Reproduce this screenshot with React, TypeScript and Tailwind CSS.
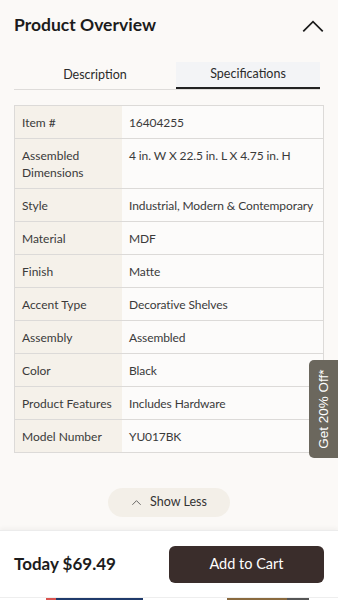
import { useState } from "react";

interface Spec {
  label: string;
  value: string;
}

const specs: Spec[] = [
  { label: "Item #", value: "16404255" },
  { label: "Assembled Dimensions", value: "4 in. W X 22.5 in. L X 4.75 in. H" },
  { label: "Style", value: "Industrial, Modern & Contemporary" },
  { label: "Material", value: "MDF" },
  { label: "Finish", value: "Matte" },
  { label: "Accent Type", value: "Decorative Shelves" },
  { label: "Assembly", value: "Assembled" },
  { label: "Color", value: "Black" },
  { label: "Product Features", value: "Includes Hardware" },
  { label: "Model Number", value: "YU017BK" },
];

const ChevronUp = ({ className }: { className?: string }) => (
  <svg viewBox="0 0 24 24" fill="none" stroke="currentColor" strokeWidth={1.6} className={className}>
    <path d="M3 17 L12 8 L21 17" />
  </svg>
);

const App = () => {
  const [tab, setTab] = useState("spec");

  return (
    <div
      className="relative h-[600px] w-[338px] overflow-hidden bg-[#fbf9f7] text-[#2b2b2b] flex flex-col"
      style={{ fontFamily: "Lato, 'Open Sans', sans-serif" }}
    >
      <div className="flex-1 overflow-hidden px-[14px]">
        <div className="flex items-center justify-between h-[50px] pt-[1px]">
          <h1 className="text-[17.5px] font-bold text-[#1c1c1c]">Product Overview</h1>
          <ChevronUp className="w-[26px] h-[26px] mr-[-2px] text-[#1c1c1c]" />
        </div>

        <div className="mt-[12px] flex w-[306px] border-b border-[#dedcda]">
          <button
            className={`w-[162px] h-[27px] text-[12.5px] ${tab === "desc" ? "bg-[#f3f4f6] border-b-2 border-[#222] -mb-px" : ""}`}
            onClick={() => setTab("desc")}
          >
            Description
          </button>
          <button
            className={`flex-1 h-[27px] text-[12.5px] ${tab === "spec" ? "bg-[#f3f4f6] border-b-2 border-[#222] -mb-px" : ""}`}
            onClick={() => setTab("spec")}
          >
            Specifications
          </button>
        </div>

        <div className="mt-[15px] border border-[#dcdad8] w-[310px]">
          {specs.map((s, i) => (
            <div key={s.label} className={`flex ${i > 0 ? "border-t border-[#dcdad8]" : ""}`}>
              <div className="w-[107px] shrink-0 bg-[#f5f1ea] px-[7px] py-[7.5px] text-[12px] leading-[17px] text-[#3a3a3a] whitespace-nowrap">
                {s.label === "Assembled Dimensions" ? (
                  <>
                    Assembled
                    <br />
                    Dimensions
                  </>
                ) : (
                  s.label
                )}
              </div>
              <div className="flex-1 px-[7px] py-[7.5px] text-[12px] leading-[17px] text-[#3a3a3a] bg-[#fcfbfa] whitespace-nowrap tracking-[-0.1px]">
                {s.value}
              </div>
            </div>
          ))}
        </div>

        <div className="flex justify-center mt-[35px]">
          <button className="flex items-center gap-[8px] h-[29px] w-[122px] justify-center rounded-full bg-[#f3efe8] text-[12.5px] text-[#333]">
            <ChevronUp className="w-[11px] h-[11px]" />
            Show Less
          </button>
        </div>
      </div>

      <div className="bg-white border-t border-[#ececec] shadow-[0_-2px_4px_rgba(0,0,0,0.04)]">
        <div className="flex items-center justify-between px-[14px] h-[66px]">
          <span className="text-[17px] font-bold text-[#1c1c1c]">Today $69.49</span>
          <button className="w-[155px] h-[37px] rounded-[6px] bg-[#3a2d2b] text-white text-[14.5px]">
            Add to Cart
          </button>
        </div>
        <div className="flex h-[3px] border-t border-[#eee]">
          <div className="w-[46px]" />
          <div className="w-[10px] bg-[#d9534f]" />
          <div className="w-[87px] bg-[#1f3a6b]" />
          <div className="w-[84px]" />
          <div className="w-[60px] bg-[#8a6a3e]" />
          <div className="w-[22px] bg-[#555]" />
        </div>
      </div>

      <div className="absolute right-0 top-[360px] w-[29px] h-[98px] bg-[#6b675d] rounded-l-[5px] flex items-center justify-center">
        <span
          className="-rotate-90 whitespace-nowrap text-white text-[13.5px]"
          style={{ fontFamily: "'Liberation Sans', Arial, sans-serif" }}
        >
          Get 20% Off*
        </span>
      </div>
    </div>
  );
};

export default App;
